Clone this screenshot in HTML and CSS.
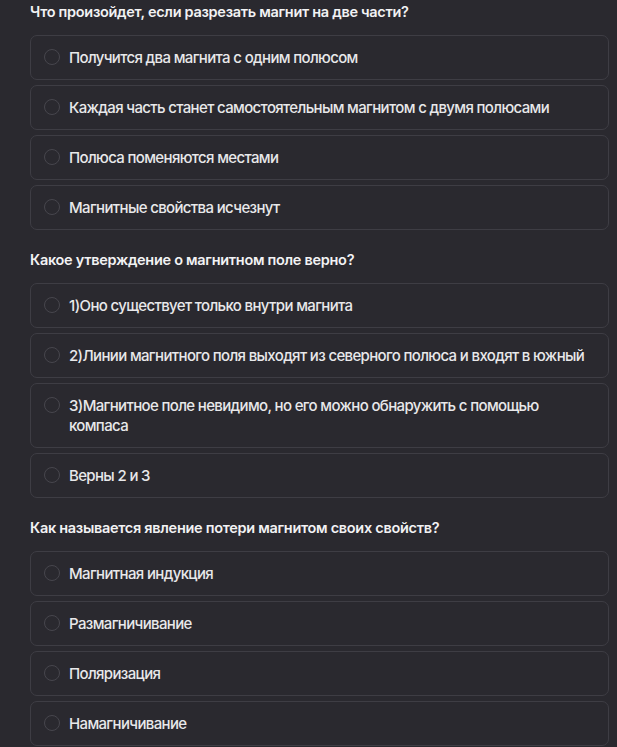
FILE: index.html
```html
<!DOCTYPE html>
<html lang="ru">
<head>
    <meta charset="UTF-8">
    <meta name="viewport" content="width=device-width, initial-scale=1.0">
    <title>Тест: магниты</title>
    <link rel="stylesheet" href="styles.css">
</head>
<body>

    <!-- Вопрос 1 -->
    <div class="question">
        <h3 class="question-title">Что произойдет, если разрезать магнит на две части?</h3>
        <div class="options">
            <label class="option"><span class="radio"></span><span class="option-text">Получится два магнита с одним полюсом</span></label>
            <label class="option"><span class="radio"></span><span class="option-text">Каждая часть станет самостоятельным магнитом с двумя полюсами</span></label>
            <label class="option"><span class="radio"></span><span class="option-text">Полюса поменяются местами</span></label>
            <label class="option"><span class="radio"></span><span class="option-text">Магнитные свойства исчезнут</span></label>
        </div>
    </div>

    <!-- Вопрос 2 -->
    <div class="question">
        <h3 class="question-title">Какое утверждение о магнитном поле верно?</h3>
        <div class="options">
            <label class="option"><span class="radio"></span><span class="option-text">1)Оно существует только внутри магнита</span></label>
            <label class="option"><span class="radio"></span><span class="option-text">2)Линии магнитного поля выходят из северного полюса и входят в южный</span></label>
            <label class="option"><span class="radio"></span><span class="option-text">3)Магнитное поле невидимо, но его можно обнаружить с помощью компаса</span></label>
            <label class="option"><span class="radio"></span><span class="option-text">Верны 2 и 3</span></label>
        </div>
    </div>

    <!-- Вопрос 3 -->
    <div class="question">
        <h3 class="question-title">Как называется явление потери магнитом своих свойств?</h3>
        <div class="options">
            <label class="option"><span class="radio"></span><span class="option-text">Магнитная индукция</span></label>
            <label class="option"><span class="radio"></span><span class="option-text">Размагничивание</span></label>
            <label class="option"><span class="radio"></span><span class="option-text">Поляризация</span></label>
            <label class="option"><span class="radio"></span><span class="option-text">Намагничивание</span></label>
        </div>
    </div>

</body>
</html>
```

FILE: styles.css
```css
body {
    font-family: Inter, "Noto Sans", sans-serif;
    background-color: #2a292f;
    color: #e8e8ea;
    margin: 0;
    padding: 2px 8px 0 30px;
}

.question {
    margin-bottom: 20px;
}

.question-title {
    font-size: 14.5px;
    font-weight: 600;
    line-height: 20px;
    color: #f2f2f4;
    margin: 0 0 13px;
    letter-spacing: -0.3px;
}

.options {
    display: flex;
    flex-direction: column;
    gap: 5px;
}

.option {
    display: flex;
    align-items: flex-start;
    gap: 9px;
    padding: 12px 12px 11px 12px;
    border: 1px solid #3e3d44;
    border-radius: 7px;
    font-size: 15px;
    font-weight: 500;
    line-height: 20px;
    letter-spacing: -0.65px;
    cursor: pointer;
}

.radio {
    flex: none;
    width: 14px;
    height: 14px;
    margin: 1px 0 0 1px;
    border: 1.5px solid #47464d;
    border-radius: 50%;
}
```
